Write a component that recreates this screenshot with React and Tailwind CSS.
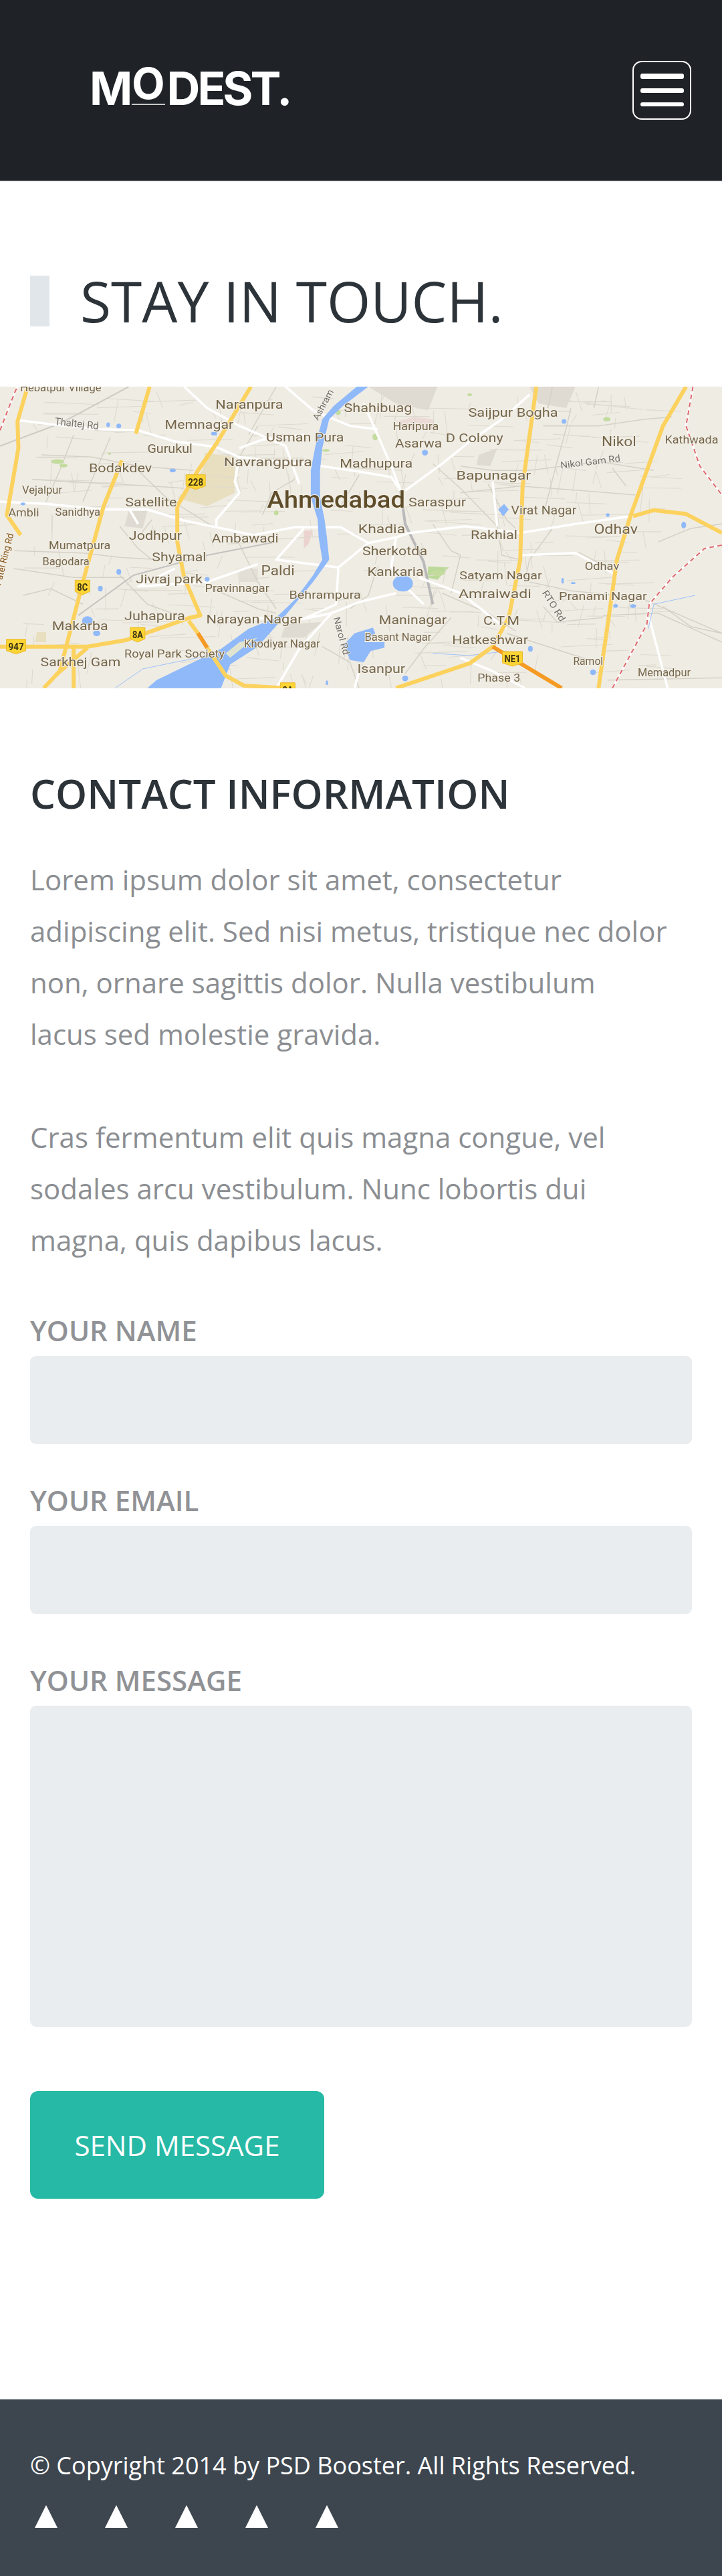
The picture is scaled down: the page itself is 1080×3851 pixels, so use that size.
// map data is kept in the coordinates of a 1568 wide tracing, scaled down on render
const sx = (x) => +(x / 1.452).toFixed(1);
const sy = (y) => +(y / 3 - 8).toFixed(1);
const line = (pts) => {
  let d = "";
  for (let i = 0; i < pts.length; i += 2) {
    d += (i === 0 ? "M" : "L") + sx(pts[i]) + " " + sy(pts[i + 1]) + " ";
  }
  return d;
};

const streets = [];
let seed = 41;
const rnd = () => {
  seed = (seed * 1103 + 12345) % 65536;
  return seed / 65536;
};
for (let i = 0; i < 420; i++) {
  const x = 40 + rnd() * 1380;
  const y = 40 + rnd() * 1300;
  const flat = rnd() > 0.5;
  const len = 30 + rnd() * 90;
  const lean = (rnd() - 0.5) * 30;
  streets.push(flat ? [x, y, x + len, y + lean] : [x, y, x + lean, y + len]);
}

const minorRoads = [
  [90, 330, 200, 340, 300, 380, 420, 400], [70, 440, 200, 455, 330, 470, 400, 480],
  [300, 400, 360, 520, 470, 660], [160, 240, 130, 400, 100, 540], [240, 250, 200, 440, 180, 540],
  [560, 200, 520, 340], [600, 24, 540, 240], [30, 760, 180, 770, 260, 790, 350, 800],
  [30, 840, 160, 880, 270, 880], [180, 1000, 110, 930, 50, 960], [450, 920, 560, 1020, 600, 1040],
  [260, 870, 320, 1000, 400, 1060], [1000, 380, 1070, 400, 1150, 400, 1300, 360, 1420, 400],
  [1180, 200, 1300, 200, 1400, 170, 1460, 160], [1000, 500, 1130, 470, 1260, 490, 1380, 510],
  [1240, 120, 1230, 210, 1210, 360, 1180, 600], [1360, 470, 1330, 390], [1060, 460, 1100, 620, 1120, 660],
  [1140, 780, 1260, 770, 1340, 860], [1150, 900, 1240, 940, 1340, 960], [1200, 660, 1150, 800, 1140, 900],
  [1430, 720, 1500, 660, 1568, 640], [1400, 980, 1568, 1130], [1310, 1050, 1430, 1040, 1568, 1170],
  [1180, 1010, 1210, 1080, 1310, 1060], [1100, 1130, 1280, 1250, 1300, 1260], [1320, 1340, 1568, 1330],
  [960, 950, 1060, 1040, 1120, 1120], [980, 1060, 920, 1200, 880, 1310], [700, 1190, 760, 1260, 780, 1376],
  [780, 420, 740, 560, 700, 560], [940, 370, 1000, 480, 1080, 650], [1080, 650, 1090, 780, 1130, 800],
  [1200, 24, 1190, 120], [1300, 24, 1290, 120], [520, 730, 560, 900, 600, 1020], [820, 830, 800, 960, 760, 1020],
  [1000, 780, 980, 950], [940, 640, 980, 760, 1000, 780], [1440, 1010, 1500, 1100, 1568, 1130],
  [640, 440, 590, 500, 570, 600], [260, 650, 300, 750, 330, 800], [330, 620, 300, 700], [540, 1140, 480, 1220],
];

const whiteRoads = [
  [40, 175, 120, 195, 220, 215, 300, 220, 380, 270, 470, 295, 520, 340, 600, 360, 680, 375, 780, 405, 850, 430, 870, 490],
  [520, 340, 510, 450, 520, 500, 470, 620, 470, 660],
  [0, 540, 100, 550, 225, 575, 320, 575, 400, 625, 470, 655, 550, 690, 640, 655, 740, 655, 800, 725, 860, 700, 890, 680, 1010, 650, 1130, 680, 1250, 640, 1370, 605],
  [400, 24, 450, 120, 520, 200, 620, 290, 650, 460],
  [520, 300, 570, 262, 660, 240],
  [790, 100, 850, 380, 870, 490],
  [880, 490, 960, 370, 1020, 270, 1090, 170, 1150, 60],
  [620, 24, 680, 130, 760, 200, 820, 215],
  [660, 660, 600, 800, 735, 835, 800, 725],
  [735, 835, 730, 1000, 660, 1065, 450, 1060],
  [860, 950, 780, 990, 720, 1040, 660, 1065],
  [910, 880, 1000, 950, 1100, 1110],
  [600, 1376, 650, 1200, 720, 1040],
  [780, 1300, 770, 1376], [1000, 1240, 1070, 1300, 1140, 1376],
  [1450, 1376, 1410, 1060], [380, 840, 300, 920, 450, 900, 560, 820],
  [920, 1000, 880, 920, 850, 830, 860, 700], [300, 640, 280, 570], [1070, 450, 1080, 650],
  [1130, 780, 1250, 770, 1340, 870],
];

const labels = [
  ["Hebatpur Village", 44, 220, 45, 17], ["Naranpura", 468, 615, 122, 19], ["Shahibuag", 747, 895, 138, 19],
  ["Saijpur Bogha", 1017, 1212, 158, 19], ["Memnagar", 358, 507, 212, 19], ["Haripura", 853, 953, 218, 17],
  ["Usman Pura", 578, 747, 270, 19], ["D Colony", 968, 1093, 272, 19], ["Asarwa", 858, 960, 298, 19],
  ["Nikol", 1307, 1382, 292, 21], ["Kathwada", 1444, 1560, 280, 17], ["Gurukul", 320, 418, 322, 19],
  ["Navrangpura", 486, 678, 380, 19], ["Madhupura", 738, 896, 388, 19], ["Bodakdev", 193, 330, 408, 19],
  ["Bapunagar", 991, 1153, 440, 19], ["Vejalpur", 48, 135, 503, 17], ["Saraspur", 887, 1012, 560, 19],
  ["Satellite", 272, 384, 560, 19], ["Virat Nagar", 1110, 1252, 597, 19], ["Ambli", 18, 85, 605, 17],
  ["Sanidhya", 120, 218, 603, 17], ["Khadia", 778, 880, 680, 19], ["Odhav", 1290, 1385, 685, 21],
  ["Rakhial", 1022, 1124, 707, 19], ["Jodhpur", 280, 395, 712, 19], ["Ambawadi", 460, 605, 722, 19],
  ["Mumatpura", 106, 240, 752, 17], ["Sherkotda", 787, 928, 780, 19], ["Shyamal", 330, 448, 808, 19],
  ["Bagodara", 92, 194, 825, 17], ["Odhav", 1270, 1345, 846, 17], ["Paldi", 567, 640, 870, 21],
  ["Kankaria", 798, 920, 873, 19], ["Satyam Nagar", 998, 1177, 888, 17], ["Jivraj park", 295, 440, 906, 19],
  ["Pravinnagar", 445, 585, 945, 17], ["Behrampura", 628, 784, 975, 17], ["Amraiwadi", 996, 1154, 973, 19],
  ["Pranami Nagar", 1214, 1405, 980, 17], ["Narayan Nagar", 448, 657, 1087, 19], ["Juhapura", 270, 402, 1070, 19],
  ["Maninagar", 823, 970, 1090, 19], ["C.T.M", 1050, 1128, 1092, 19], ["Makarba", 113, 235, 1115, 19],
  ["Basant Nagar", 792, 937, 1163, 16], ["Khodiyar Nagar", 530, 695, 1193, 16], ["Hatkeshwar", 982, 1147, 1178, 19],
  ["Royal Park Society", 270, 488, 1240, 17], ["Sarkhej Gam", 88, 262, 1277, 19], ["Isanpur", 776, 880, 1307, 19],
  ["Ramol", 1245, 1310, 1272, 16], ["Memadpur", 1385, 1500, 1322, 16], ["Phase 3", 1037, 1130, 1347, 17],
];

const roadNames = [
  ["Thaltej Rd", 166, 205, 66, 6, 15, "#75716a"], ["Nikol Gam Rd", 1283, 375, 90, -7, 14, "#75716a"],
  ["Ashram", 708, 112, 50, -62, 14, "#75716a"], ["Narol Rd", 735, 1145, 58, 75, 14, "#75716a"],
  ["RTO Rd", 1197, 1015, 52, 58, 14, "#75716a"], ["Sardar Patel Ring Rd", 8, 863, 122, -76, 14, "#8a5a1e"],
];

const shields = [
  ["228", 425, 452, 29, 24], ["8C", 179, 925, 22, 24], ["8A", 299, 1137, 22, 24],
  ["947", 35, 1190, 29, 24], ["NE1", 1113, 1245, 30, 24], ["8A", 625, 1385, 22, 24],
];

const blueSpots = [
  [235, 195, 3, 5], [258, 200, 4, 5], [465, 235, 5, 4], [375, 400, 5, 4], [50, 550, 4, 3], [218, 930, 4, 6],
  [258, 855, 4, 6], [450, 888, 4, 5], [923, 320, 5, 6], [1225, 180, 4, 5], [1320, 600, 3, 4], [1485, 645, 4, 7],
  [1222, 895, 2, 6], [1245, 905, 4, 2], [1337, 1007, 4, 4], [1375, 1008, 5, 4], [1152, 1200, 4, 6],
  [1288, 1305, 5, 6], [880, 1333, 5, 6], [710, 1352, 2, 5], [210, 1130, 6, 6], [190, 1075, 9, 10],
];

const greenSpots = [
  [125, 360, 14, 10], [1318, 170, 8, 9], [815, 250, 6, 14], [950, 860, 16, 12], [735, 140, 5, 10], [600, 590, 5, 10],
  [1020, 60, 5, 6], [708, 310, 8, 6], [238, 325, 3, 5], [138, 378, 9, 8],
];

function MapDrawing() {
  return (
    <svg viewBox="0 0 1080 451" className="block w-full h-[451px]" preserveAspectRatio="none">
      <defs>
        <filter id="soft" x="0" y="0" width="100%" height="100%">
          <feGaussianBlur stdDeviation="0.7" />
        </filter>
      </defs>
      <rect width="1080" height="451" fill="#efece4" />
      <g filter="url(#soft)">
        <path d={line([445, 320, 510, 340, 510, 500, 450, 560, 385, 525, 440, 400]) + "Z"} fill="#e8dfc0" />
        <path d={line([1150, 24, 1250, 24, 1230, 120, 1170, 100]) + "Z"} fill="#dfdbd3" />
        <path d={line([280, 580, 320, 580, 310, 660, 270, 650]) + "Z"} fill="#dfdbd3" />
        <path d={line([620, 1090, 700, 1080, 660, 1150, 610, 1150]) + "Z"} fill="#dfdbd3" />
        <path d={line([520, 840, 560, 840, 560, 900, 520, 900]) + "Z"} fill="#e3dfd6" />
        <path d={line([800, 24, 950, 24, 930, 130, 860, 100]) + "Z"} fill="#dfdbd3" />
        <path d={line([900, 160, 940, 170, 950, 215, 880, 215, 860, 180]) + "Z"} fill="#eadbd6" />
        <path d={line([1040, 330, 1080, 300, 1065, 380, 1035, 375]) + "Z"} fill="#dfdbd3" />
        <path d={line([80, 1125, 100, 1125, 100, 1170, 76, 1170]) + "Z"} fill="#e8dfc0" />
        <path d={line([660, 670, 680, 670, 670, 730, 660, 750]) + "Z"} fill="#ecd3d0" />
        <path d={line([930, 830, 975, 835, 950, 890, 928, 880]) + "Z"} fill="#bcd99a" />
        {streets.map((r, i) => (
          <path key={i} d={line(r)} fill="none" stroke="#dedacf" strokeWidth="1.1" />
        ))}
        {minorRoads.map((r, i) => (
          <path key={i} d={line(r)} fill="none" stroke="#d5d1c6" strokeWidth="1.5" />
        ))}
        <path d={line([0, 290, 130, 190, 280, 24])} fill="none" stroke="#cfccc4" strokeWidth="2" />
        <path d={line([170, 1050, 290, 870, 450, 780, 600, 720])} fill="none" stroke="#c4c3bf" strokeWidth="2" />
        <path d={line([870, 490, 880, 640, 920, 810, 940, 1000])} fill="none" stroke="#b9b9b9" strokeWidth="4" />
        {greenSpots.map((s, i) => (
          <ellipse key={i} cx={sx(s[0])} cy={sy(s[1])} rx={s[2] * 0.7} ry={s[3] * 0.35} fill="#c3dc9e" />
        ))}
        {whiteRoads.map((r, i) => (
          <path key={i} d={line(r)} fill="none" stroke="#ffffff" strokeWidth="3.5" strokeLinejoin="round" />
        ))}
        <path
          d={line([775, 24, 725, 110, 700, 170, 685, 290, 675, 400, 675, 520, 690, 620, 692, 700, 700, 800, 680, 870, 640, 980, 600, 1060, 540, 1110, 480, 1200, 420, 1260, 340, 1340, 320, 1376, 480, 1376, 500, 1270, 560, 1190, 620, 1050, 680, 900, 715, 800, 710, 700, 705, 620, 695, 520, 695, 400, 700, 300, 715, 170, 745, 110, 800, 24]) + "Z"}
          fill="#8fb9f9"
        />
        <path d={line([500, 1240, 530, 1190, 560, 1150, 520, 1170, 490, 1220]) + "Z"} fill="#dfe3d0" />
        <ellipse cx={sx(875)} cy={sy(907)} rx="15" ry="12" fill="#8fb9f9" />
        <path d={line([810, 1105, 770, 1130, 748, 1180, 760, 1250, 790, 1260, 805, 1210, 835, 1195, 835, 1170, 790, 1170, 815, 1130]) + "Z"} fill="#8fb9f9" />
        <path d={line([1082, 575, 1095, 550, 1105, 575, 1093, 605]) + "Z"} fill="#8fb9f9" />
        <path d={line([250, 1376, 310, 1290, 380, 1260, 470, 1225])} fill="none" stroke="#9ec3f8" strokeWidth="1" />
        <path d={line([1510, 960, 1420, 1000, 1408, 1110])} fill="none" stroke="#9ec3f8" strokeWidth="1" />
        <path d={line([940, 1220, 1020, 1230, 1100, 1210])} fill="none" stroke="#9ec3f8" strokeWidth="1" />
        {blueSpots.map((s, i) => (
          <ellipse key={i} cx={sx(s[0])} cy={sy(s[1])} rx={s[2] * 0.9} ry={s[3] * 0.7} fill="#8fb9f9" />
        ))}
        <g fill="none" strokeLinejoin="round">
          <path d={line([0, 220, 32, 50, 38, 24])} stroke="#ffffff" strokeWidth="3" />
          <path d={line([0, 220, 32, 50, 38, 24])} stroke="#de6a6e" strokeWidth="2" strokeDasharray="7 5" />
          <path d={line([1505, 24, 1490, 200, 1520, 380, 1568, 510])} stroke="#ffffff" strokeWidth="3" />
          <path d={line([1505, 24, 1490, 200, 1520, 380, 1568, 510])} stroke="#de6a6e" strokeWidth="2" strokeDasharray="7 5" />
          <path d={line([1568, 735, 1530, 750, 1460, 880, 1410, 1000, 1405, 1090, 1330, 1376])} stroke="#ffffff" strokeWidth="3" />
          <path d={line([1568, 735, 1530, 750, 1460, 880, 1410, 1000, 1405, 1090, 1330, 1376])} stroke="#de6a6e" strokeWidth="2" strokeDasharray="7 5" />
          <g stroke="#fcd25f" strokeWidth="6">
            <path d={line([60, 24, 38, 180, 40, 300, 15, 600, 45, 690])} />
            <path d={line([325, 24, 295, 235])} />
            <path d={line([545, 24, 470, 280, 430, 400, 385, 560, 385, 720, 400, 880, 435, 1050, 410, 1062, 275, 1160, 190, 1190, 0, 1190])} />
            <path d={line([410, 1075, 430, 1130])} />
            <path d={line([450, 1195, 490, 1320, 530, 1365, 620, 1376])} />
            <path d={line([265, 355, 225, 560, 180, 900, 130, 1300, 95, 1376])} />
            <path d={line([160, 1190, 160, 1376])} />
            <path d={line([190, 1195, 120, 1320])} />
            <path d={line([1165, 24, 1135, 470, 1130, 800, 1105, 1060, 1070, 1190, 1020, 1265, 860, 1376])} />
            <path d={line([1490, 24, 1440, 200, 1370, 600, 1340, 800, 1300, 1376])} />
            <path d={line([1375, 605, 1420, 578, 1490, 595, 1568, 680])} />
          </g>
          <g stroke="#f59a23" strokeWidth="6">
            <path d={line([430, 1130, 450, 1195])} />
            <path d={line([1070, 1190, 1220, 1376])} />
          </g>
        </g>
        {shields.map((s) => (
          <g key={s[1]}>
            <path
              d={`M${sx(s[1]) - s[3] / 2} ${sy(s[2]) - 11} h${s[3]} v17 l-${s[3] / 2} 5 l-${s[3] / 2} -5 Z`}
              fill="#fcd535"
              stroke="#e8b92a"
              strokeWidth="1"
            />
            <text
              x={sx(s[1])}
              y={sy(s[2]) + 5}
              textAnchor="middle"
              fontSize="15"
              fontFamily="Roboto, sans-serif"
              fontWeight="700"
              fill="#3a3214"
              textLength={s[3] - 6}
              lengthAdjust="spacingAndGlyphs"
            >
              {s[0]}
            </text>
          </g>
        ))}
        <g fontFamily="Roboto, sans-serif">
          {labels.map((l, i) => (
            <text
              key={i}
              x={sx(l[1])}
              y={sy(l[3])}
              fontSize={l[4]}
              fill="#75664a"
              stroke="#f2efe8"
              strokeWidth="2"
              paintOrder="stroke"
              textLength={sx(l[2]) - sx(l[1])}
              lengthAdjust="spacingAndGlyphs"
            >
              {l[0]}
            </text>
          ))}
          <text
            x={sx(580)}
            y={sy(568)}
            fontSize="35"
            fontWeight="500"
            fill="#5f4e2c"
            stroke="#f2efe8"
            strokeWidth="2"
            paintOrder="stroke"
            textLength={sx(880) - sx(580)}
            lengthAdjust="spacingAndGlyphs"
          >
            Ahmedabad
          </text>
          {roadNames.map((r, i) => (
            <text
              key={i}
              transform={`translate(${sx(r[1])} ${sy(r[2])}) rotate(${r[4]})`}
              textAnchor="middle"
              fontSize={r[5]}
              fill={r[6]}
              stroke="#f2efe8"
              strokeWidth="1.5"
              paintOrder="stroke"
              textLength={r[3]}
              lengthAdjust="spacingAndGlyphs"
            >
              {r[0]}
            </text>
          ))}
        </g>
      </g>
    </svg>
  );
}

function Field({ label, className }) {
  return (
    <div className={className}>
      <label className="block text-[42px] leading-[60px] font-semibold text-[#909296]">{label}</label>
    </div>
  );
}

const App = () => {
  return (
    <div className="w-[1080px] h-[3851px] flex flex-col bg-white font-['Open_Sans',sans-serif]">
      <header className="h-[271px] shrink-0 flex items-start justify-between bg-[#1f2328] border-b border-[#9a9c9e] pl-[134px] pr-[46px]">
        <div className="mt-[90px] h-[84px] flex items-end text-white font-['Inter',sans-serif] font-bold text-[69px] leading-[84px] tracking-[-4px] blur-[0.6px]">
          <span>M</span>
          <span className="text-[64px] leading-[49px] mb-[17px] mx-[3px] pb-[6px] border-b-2 border-[#c8c8c8] tracking-normal">O</span>
          <span>DEST.</span>
        </div>
        <button className="mt-[91px] w-[88px] h-[88px] rounded-[14px] border-2 border-white flex flex-col items-center pt-[17px]">
          <span className="block w-[65px] h-[8px] rounded-[3px] bg-white" />
          <span className="block w-[65px] h-[7px] rounded-[3px] bg-white mt-[14px]" />
          <span className="block w-[65px] h-[6px] rounded-[3px] bg-white mt-[14px]" />
        </button>
      </header>

      <section className="h-[307px] shrink-0 px-[45px] pt-[141px]">
        <h1 className="flex items-center h-[76px] border-l-[29px] border-[#e1e6ea] pl-[46px] text-[84px] leading-[76px] font-[380] text-[#2c3339] whitespace-nowrap">
          STAY IN TOUCH.
        </h1>
      </section>

      <MapDrawing />

      <main className="flex-1 px-[45px] pt-[117px]">
        <h2 className="text-[60px] leading-[80px] font-semibold text-[#2c3339] whitespace-nowrap">CONTACT INFORMATION</h2>
        <p className="mt-[50px] text-[42px] leading-[77px] text-[#8b8e92] whitespace-nowrap">
          Lorem ipsum dolor sit amet, consectetur
          <br />
          adipiscing elit. Sed nisi metus, tristique nec dolor
          <br />
          non, ornare sagittis dolor. Nulla vestibulum
          <br />
          lacus sed molestie gravida.
          <br />
          <br />
          Cras fermentum elit quis magna congue, vel
          <br />
          sodales arcu vestibulum. Nunc lobortis dui
          <br />
          magna, quis dapibus lacus.
        </p>

        <form className="mt-[67px]">
          <Field label="YOUR NAME" />
          <div className="h-[132px] rounded-[9px] bg-[#e9edf0] mt-[8px]" />
          <Field label="YOUR EMAIL" className="mt-[54px]" />
          <div className="h-[132px] rounded-[9px] bg-[#e9edf0] mt-[8px]" />
          <Field label="YOUR MESSAGE" className="mt-[69px]" />
          <div className="h-[480px] rounded-[9px] bg-[#e9edf0] mt-[8px]" />
          <button
            type="button"
            className="mt-[96px] block w-[440px] h-[161px] rounded-[12px] bg-[#26b9a5] text-white text-[42px]"
          >
            SEND MESSAGE
          </button>
        </form>
      </main>

      <footer className="h-[264px] shrink-0 bg-[#3d464f] px-[45px] pt-[72px]">
        <p className="text-[36px] leading-[54px] text-white whitespace-nowrap">© Copyright 2014 by PSD Booster. All Rights Reserved.</p>
        <div className="flex gap-[71px] pl-[7px] mt-[32px]">
          {[0, 1, 2, 3, 4].map((i) => (
            <svg key={i} width="34" height="34" viewBox="0 0 34 34">
              <polygon points="17,0 34,34 0,34" fill="#ffffff" />
            </svg>
          ))}
        </div>
      </footer>
    </div>
  );
};

export default App;
